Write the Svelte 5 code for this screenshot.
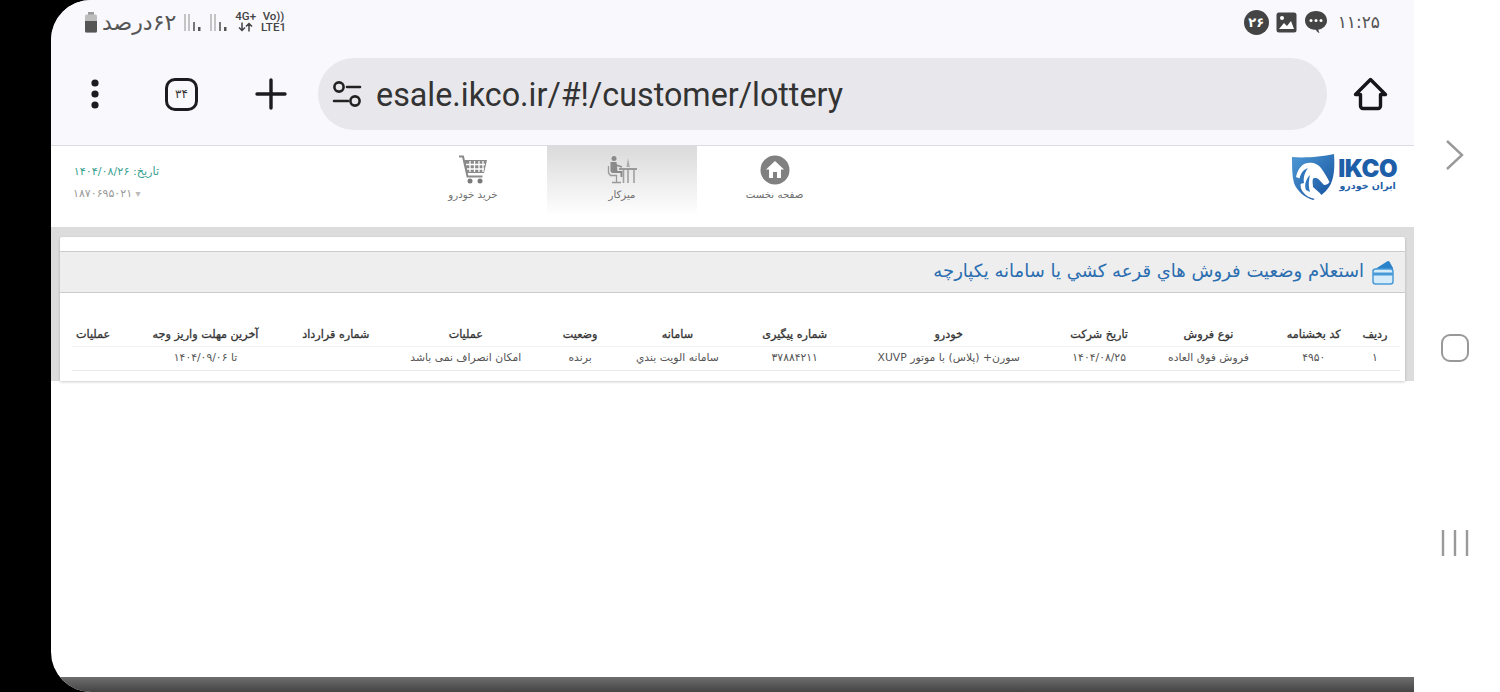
<script>
  const head = ['ردیف', 'کد بخشنامه', 'نوع فروش', 'تاریخ شرکت', 'خودرو', 'شماره پیگیری', 'سامانه', 'وضعیت', 'عملیات', 'شماره قرارداد', 'آخرین مهلت واریز وجه', 'عملیات'];
  const row = ['۱', '۴۹۵۰', 'فروش فوق العاده', '۱۴۰۴/۰۸/۲۵', 'سورن+ (پلاس) با موتور XUVP', '۳۷۸۸۴۲۱۱', 'سامانه الویت بندي', 'برنده', 'امکان انصراف نمی باشد', '', 'تا ۱۴۰۴/۰۹/۰۶', ''];
  const widths = [50, 72, 138, 80, 220, 87, 147, 47, 181, 78, 182, 42];
</script>

<div class="device">
  <div class="screen">
    <div class="main">
      <div class="chrome">
        <div class="status">
          <div class="status-left">
            <svg class="battery" width="14" height="21" viewBox="0 0 14 21">
              <rect x="4" y="0" width="6" height="3" fill="#9a9a9a" />
              <rect x="1" y="2.500" width="12" height="18" rx="1.500" fill="#bdbdbd" />
              <path d="M1 9h12v10a1.500 1.500 0 0 1-1.500 1.500h-9A1.500 1.500 0 0 1 1 19z" fill="#555" />
            </svg>
            <span class="batt-text" dir="rtl">۶۲درصد</span>
            {#each [0, 1] as s}
              <svg class="signal" width="18" height="19" viewBox="0 0 18 19">
                <rect x="1" y="1" width="2" height="17" fill="#c4c4c4" />
                <rect x="5" y="1" width="2" height="17" fill="#c4c4c4" />
                <rect x="10" y="9" width="2" height="9" fill="#777" />
                <rect x="15" y="14" width="2.500" height="4" fill="#555" />
              </svg>
            {/each}
            <div class="net">
              <span>4G+</span>
              <svg width="15" height="10" viewBox="0 0 15 10">
                <path d="M4 0.500v8M1 5.500l3 3 3-3M11 9.500v-8M8 4.500l3-3 3 3" fill="none" stroke="#444" stroke-width="1.500" />
              </svg>
            </div>
            <div class="net volte"><span>Vo))</span><span>LTE1</span></div>
          </div>
          <div class="status-right">
            <span class="count">۲۶</span>
            <svg width="21" height="21" viewBox="0 0 21 21">
              <rect x="0.500" y="0.500" width="20" height="20" rx="2.500" fill="#444" />
              <circle cx="6" cy="6" r="2" fill="#fff" />
              <path d="M3 17l5-6 3 3 4-5 3 8z" fill="#fff" />
            </svg>
            <svg width="24" height="24" viewBox="0 0 24 24">
              <path d="M12 1C5.600 1 1 5 1 10.500c0 5 4 9 10 9.200 1 0 1 .3 1.800 1.500.5.900 1.500 1.500 2.700 1.500-.9-1-1.200-2-1-3.100C19.500 18.700 23 15 23 10.500 23 5 18.400 1 12 1z" fill="#444" />
              <circle cx="7" cy="10.500" r="1.500" fill="#fff" />
              <circle cx="12" cy="10.500" r="1.500" fill="#fff" />
              <circle cx="17" cy="10.500" r="1.500" fill="#fff" />
            </svg>
            <span class="clock" dir="rtl">۱۱:۲۵</span>
          </div>
        </div>

        <div class="toolbar">
          <div class="tools">
            <svg class="tool" width="14" height="32" viewBox="0 0 14 32">
              <circle cx="7" cy="5" r="3.600" fill="#1c1c20" />
              <circle cx="7" cy="16" r="3.600" fill="#1c1c20" />
              <circle cx="7" cy="27" r="3.600" fill="#1c1c20" />
            </svg>
            <span class="tabs">۳۴</span>
            <svg class="tool" width="32" height="32" viewBox="0 0 32 32">
              <path d="M16 2v28M2 16h28" stroke="#1c1c20" stroke-width="3.400" stroke-linecap="round" />
            </svg>
          </div>
          <div class="omnibox">
            <svg width="30" height="26" viewBox="0 0 30 26">
              <circle cx="7" cy="6" r="4.600" fill="none" stroke="#222" stroke-width="2.600" />
              <path d="M15 6h13M2 20h14" stroke="#222" stroke-width="2.600" stroke-linecap="round" />
              <circle cx="23" cy="20" r="4.600" fill="none" stroke="#222" stroke-width="2.600" />
            </svg>
            <span class="url">esale.ikco.ir/#!/customer/lottery</span>
          </div>
          <svg class="home" width="35" height="34" viewBox="0 0 35 34">
            <path d="M2.500 17.500 17.500 2.500l15 15h-5V29a2.500 2.500 0 0 1-2.500 2.500H10A2.500 2.500 0 0 1 7.500 29V17.500z" fill="none" stroke="#17171b" stroke-width="3.400" stroke-linejoin="round" />
          </svg>
        </div>
      </div>

      <header class="site-head">
        <div class="info" dir="rtl">
          <div class="date">تاریخ: ۱۴۰۴/۰۸/۲۶</div>
          <div class="user"><i>▾</i> ۱۸۷۰۶۹۵۰۲۱</div>
        </div>
        <nav class="menu" dir="ltr">
          <a class="item cart">
            <svg width="30" height="30" viewBox="0 0 30 30">
              <path d="M1 1.500h4l4.500 20h15" fill="none" stroke="#8a8a8a" stroke-width="2" />
              <path d="M6 5h23l-3 13H9z" fill="#8a8a8a" />
              <path d="M8 9.500h19M9 14h17M12 6v11M16.500 6v11M21 6v11M25 6v11" stroke="#fff" stroke-width="1.300" />
              <circle cx="12" cy="26" r="2.500" fill="#7a7a7a" />
              <circle cx="22" cy="26" r="2.500" fill="#7a7a7a" />
            </svg>
            <span>خرید خودرو</span>
          </a>
          <a class="item active">
            <svg width="30" height="30" viewBox="0 0 30 30">
              <circle cx="7" cy="3.500" r="2.500" fill="#8a8a8a" />
              <path d="M3.500 7h6l1 9h5v6h-2v-4H6a2.500 2.500 0 0 1-2.500-2.500z" fill="#8a8a8a" />
              <path d="M1.500 11v7l2 2.500h6V27M5 27.500h9" fill="none" stroke="#999" stroke-width="1.300" />
              <path d="M12 13h18v2H12z" fill="#999" />
              <path d="M16.500 15v13M27 15v13M21 15v13" stroke="#a0a0a0" stroke-width="1.600" />
              <path d="M21 3l1.800 9H19.500z" fill="#aaa" />
              <path d="M9 10l6 2" stroke="#8a8a8a" stroke-width="1.500" />
            </svg>
            <span>میزکار</span>
          </a>
          <a class="item first">
            <svg width="30" height="30" viewBox="0 0 30 30">
              <circle cx="15" cy="15" r="14.500" fill="#808080" />
              <path d="M15 6 6 14.500h3V23h4v-6h4v6h4v-8.500h3z" fill="#fff" />
            </svg>
            <span>صفحه نخست</span>
          </a>
        </nav>
        <div class="logo">
          <svg width="44" height="46" viewBox="0 0 44 46">
            <defs>
              <linearGradient id="shield" x1="0" y1="0" x2="1" y2="1">
                <stop offset="0" stop-color="#4f9ad6" />
                <stop offset="1" stop-color="#134f9c" />
              </linearGradient>
            </defs>
            <path d="M1 3C12 4 30 3 43 0c1 14 0 26-5 33-4 6-10 10-16 13C13 43 6 37 3 29 1 22 1 13 1 3z" fill="url(#shield)" />
            <path d="M5 23C7 14 12 9 17 9c5-1 10 1 13 5 3 4 6 9 8.500 14-1 2-3 3-5.500 3-3-3-5-6-7.500-7-1 0-2.500 0-3.500.5-1 3 0 6 0 8.500 3 3 6 5 9 8.500-2 2-4 3-7 3.500-5-1-9-3-12-7-2-3-3-5-2-13z" fill="#fff" />
            <path d="M9 30c-2-7 2-14 8-16-3 4-5 9-4 15zM15 36c-2-5 0-11 4-15-1 5-2 10 0 17z" fill="#2f76bd" />
          </svg>
          <div class="wordmark">
            <span class="latin">IKCO</span>
            <span class="farsi">ایران خودرو</span>
          </div>
        </div>
      </header>

      <section class="band">
        <div class="card">
          <div class="title" dir="rtl">
            <svg width="24" height="25" viewBox="0 0 24 25">
              <path d="M2 11 17 1.500a2 2 0 0 1 2.800.7L23 8v3z" fill="#2a82c9" />
              <rect x="3" y="9" width="20" height="15" rx="2.500" fill="#d6ecfa" stroke="#4a9ad8" stroke-width="1.500" />
              <rect x="3" y="12.500" width="20" height="3" fill="#4a9ad8" />
            </svg>
            <h2>استعلام وضعيت فروش هاي قرعه كشي يا سامانه يكپارچه</h2>
          </div>
          <table dir="rtl">
            <colgroup>
              {#each widths as w}
                <col style="width: {w}px" />
              {/each}
            </colgroup>
            <thead>
              <tr>
                {#each head as h}
                  <th>{h}</th>
                {/each}
              </tr>
            </thead>
            <tbody>
              <tr>
                {#each row as c}
                  <td>{c}</td>
                {/each}
              </tr>
            </tbody>
          </table>
        </div>
      </section>

      <div class="spacer"></div>
      <div class="gesture"></div>
    </div>

    <aside class="softkeys">
      <svg width="20" height="32" viewBox="0 0 20 32">
        <path d="M2 2l15 14L2 30" fill="none" stroke="#999" stroke-width="2.400" />
      </svg>
      <span class="recent"></span>
      <svg class="lines" width="28" height="28" viewBox="0 0 28 28">
        <path d="M2 1v26M14 1v26M26 1v26" stroke="#999" stroke-width="2.400" />
      </svg>
    </aside>
  </div>
</div>

<style>
  :global(body) {
    margin: 0;
    background: #000;
  }

  .device {
    height: 692px;
    width: 1500px;
    padding-left: 51px;
    box-sizing: border-box;
    background: #000;
    overflow: hidden;
    font-family: "DejaVu Sans", sans-serif;
  }

  .screen {
    display: flex;
    height: 100%;
    background: #fff;
    border-radius: 40px 0 0 40px;
    overflow: hidden;
  }

  .main {
    width: 1363px;
    display: flex;
    flex-direction: column;
  }

  .chrome {
    height: 145px;
    background: #f8f8fd;
    border-bottom: 1px solid #dcdce0;
    flex: none;
  }

  .status {
    height: 44px;
    display: flex;
    justify-content: space-between;
    align-items: center;
    color: #555;
    padding-left: 33px;
    padding-right: 34px;
    box-sizing: border-box;
  }

  .status-left,
  .status-right {
    display: flex;
    align-items: center;
  }

  .batt-text {
    font-size: 22px;
    margin: 0 7px 0 4px;
    color: #555;
  }

  .signal {
    margin-right: 8px;
  }

  .net {
    display: flex;
    flex-direction: column;
    align-items: center;
    font: 500 11.500px/11px Roboto, sans-serif;
    color: #444;
    margin-top: -1px;
  }

  .volte {
    margin-left: 5px;
  }

  .status-right {
    gap: 7px;
  }

  .count {
    width: 25px;
    height: 25px;
    border-radius: 50%;
    background: #444;
    color: #fff;
    font-size: 13px;
    font-weight: 700;
    display: flex;
    align-items: center;
    justify-content: center;
  }

  .clock {
    font-size: 17px;
    color: #555;
    margin-left: 3px;
  }

  .toolbar {
    display: flex;
    align-items: center;
    height: 72px;
    margin-top: 14px;
  }

  .tools {
    display: flex;
    align-items: center;
    padding-left: 37px;
    width: 267px;
    box-sizing: border-box;
  }

  .tabs {
    width: 33px;
    height: 33px;
    margin: 0 57px 0 63px;
    box-sizing: border-box;
    border: 3.500px solid #1c1c20;
    border-radius: 10px;
    font-size: 12px;
    color: #333;
    display: flex;
    align-items: center;
    justify-content: center;
  }

  .omnibox {
    width: 1009px;
    height: 72px;
    box-sizing: border-box;
    background: #e8e8ec;
    border-radius: 36px;
    display: flex;
    align-items: center;
    gap: 14px;
    padding-left: 14px;
  }

  .url {
    font: 400 32.300px Roboto, sans-serif;
    color: #333;
    white-space: nowrap;
    padding-top: 2px;
  }

  .home {
    margin-left: 26px;
  }

  .site-head {
    height: 81px;
    flex: none;
    display: flex;
    background: #fff;
    padding: 0 17px 0 22px;
    box-sizing: border-box;
  }

  .info {
    width: 86px;
    padding-top: 15px;
    font-size: 11.200px;
    line-height: 22px;
  }

  .date {
    color: #3aa192;
    white-space: nowrap;
    text-align: right;
  }

  .user {
    color: #999;
    font-size: 11px;
    white-space: nowrap;
    text-align: left;
  }

  .user i {
    font-style: normal;
    color: #bbb;
    font-size: 10px;
  }

  .menu {
    display: flex;
    margin-left: 238px;
    height: 70px;
  }

  .item {
    width: 150px;
    display: flex;
    flex-direction: column;
    align-items: center;
    padding-top: 9px;
    gap: 3px;
    box-sizing: border-box;
    font-size: 10.200px;
    color: #707070;
  }

  .item span {
    line-height: 14px;
  }

  .cart {
    padding-left: 2px;
  }

  .first {
    padding-left: 5px;
  }

  .active {
    background: linear-gradient(#dadada, #fff);
  }

  .logo {
    margin-left: auto;
    display: flex;
    gap: 3px;
    padding-top: 8px;
    height: 46px;
  }

  .wordmark {
    display: flex;
    flex-direction: column;
    align-items: stretch;
    color: #1f5fa8;
    padding-top: 3px;
  }

  .latin {
    font: 900 24px/23px Inter, sans-serif;
    letter-spacing: -0.500px;
    color: #1d5ea9;
  }

  .farsi {
    font-size: 9.500px;
    font-weight: 700;
    line-height: 12px;
    text-align: center;
    white-space: nowrap;
    direction: rtl;
  }

  .band {
    height: 154px;
    flex: none;
    box-sizing: border-box;
    background: #dcdcdc;
    padding: 10px 9px 0;
  }

  .card {
    height: 144px;
    background: #fff;
    border-radius: 2px 2px 0 0;
    padding-top: 14px;
    box-sizing: border-box;
    box-shadow: 0 1px 3px rgba(0, 0, 0, 0.2);
  }

  .title {
    height: 42px;
    box-sizing: border-box;
    background: #eeeeee;
    border-top: 1px solid #ccc;
    border-bottom: 1px solid #ccc;
    display: flex;
    align-items: center;
    gap: 6px;
    padding-right: 11px;
  }

  h2 {
    margin: -4px 0 0;
    font-size: 18px;
    font-weight: 400;
    color: #2a6db0;
    white-space: nowrap;
  }

  table {
    table-layout: fixed;
    border-collapse: collapse;
    width: 1328px;
    margin: 30px 5px 0 auto;
    color: #444;
  }

  th,
  td {
    padding: 0;
    text-align: center;
    white-space: nowrap;
    overflow: visible;
  }

  th {
    height: 23px;
    font-size: 11.200px;
    font-weight: 400;
    -webkit-text-stroke: 0.300px #333;
    color: #333;
    border-bottom: 1px solid #f2f2f2;
  }

  td {
    height: 24px;
    font-size: 10.800px;
    padding-bottom: 2px;
    box-sizing: border-box;
    color: #555;
    border-bottom: 1px solid #eaeaea;
  }

  .spacer {
    flex: 1;
  }

  .gesture {
    height: 15px;
    flex: none;
    background: linear-gradient(#6e6e6e, #444);
  }

  .softkeys {
    flex: 1;
    display: flex;
    flex-direction: column;
    align-items: center;
    padding-top: 139px;
    padding-right: 4px;
    gap: 163px;
    background: #fff;
  }

  .lines {
    margin-top: 4px;
  }

  .recent {
    width: 28px;
    height: 28px;
    box-sizing: border-box;
    border: 2.400px solid #999;
    border-radius: 9px;
  }
</style>
